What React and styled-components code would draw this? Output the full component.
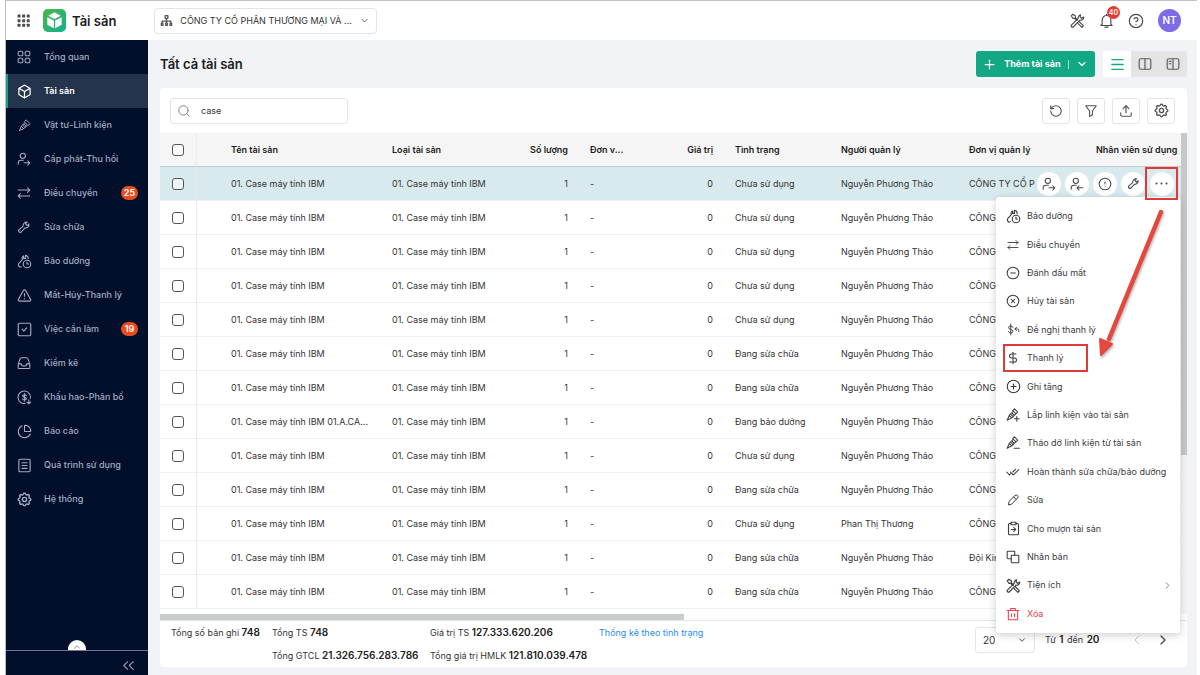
import styled, { createGlobalStyle, css } from 'styled-components'
import {
    Box, ChartPie, ChevronDown, ChevronLeft, ChevronRight, ChevronUp, ChevronsLeft, CircleAlert, CircleMinus,
    CirclePlus, CircleQuestionMark, CircleX, DollarSign, Menu as MenuLines, Plus,
    RotateCcw, Search, TriangleAlert, Upload,
} from 'lucide-react'
import { TbSettings } from 'react-icons/tb'


const GlobalStyle = createGlobalStyle`
* {
    box-sizing: border-box;
}
body {
    margin: 0;
    background: #fff;
    color: #333;
    font: 9px/14px Inter, "Noto Sans", sans-serif;
}
button, input, select {
    font: inherit;
    color: inherit;
    margin: 0;
}
button {
    cursor: pointer;
}
`

const shapes = {
    apps: <g fill="currentColor" stroke="none">{[1, 9.5, 18].map(x => [1, 9.5, 18].map(y => <rect key={x + '-' + y} x={x} y={y} width="5.500" height="5.500" rx="1" />))}</g>,
    overview: <><rect x="2" y="2" width="8" height="8" rx="2" /><rect x="14" y="2" width="8" height="8" rx="2" /><rect x="2" y="14" width="8" height="8" rx="2" /><rect x="14" y="14" width="8" height="8" rx="2" /></>,
    org: <path d="M9.500 3h5v5h-5zM12 8v5M4 17v-4h16v4M12 13v4M2.500 17h3v4h-3zM10.500 17h3v4h-3zM18.500 17h3v4h-3z" strokeWidth="2.400" />,
    screw: <path d="M15.500 2 22 8.500 18.500 12 12 5.500zM12.500 7 6 13.500 2.500 21.500 10.500 18 17 11.500M8.500 11l4.500 4.500M6.500 14l4 4M10.500 9l4.500 4.500" />,
    screwPlus: <path d="M14.500 1.500 20 7 17 10 11.500 4.500zM12 6 6 12 2 21 10.500 16.500 16 11M8 10.500l4.500 4.500M6 13l4 4M10 8.500l4 4M18.500 14.500v8M14.500 18.500h8" />,
    screwMinus: <path d="M14.500 1.500 20 7 17 10 11.500 4.500zM12 6 6 12 2 21 10.500 16.500 16 11M8 10.500l4.500 4.500M6 13l4 4M10 8.500l4 4M14 21h9" />,
    personOut: <><circle cx="10" cy="6.500" r="4.500" /><path d="M2 21v-2a5 5 0 0 1 5-5h4M12 18.500h10M18.500 15l3.500 3.500-3.500 3.500" /></>,
    personIn: <><circle cx="10" cy="6.500" r="4.500" /><path d="M2 21v-2a5 5 0 0 1 5-5h4M12 18.500h10M15.500 15 12 18.500l3.500 3.500" /></>,
    swap: <path d="M2 7h20M18 3l4 4-4 4M22 17H2M6 13l-4 4 4 4" />,
    wrench: <path d="M20.500 6.500 17.500 9.500 14.500 6.500 17.500 3.500A6 6 0 0 0 10.500 10.500L3 17a3 3 0 0 0 4 4L13.500 13.500A6 6 0 0 0 20.500 6.500zM5.500 18.500h.010" />,
    maintain: <><path d="M13.500 2v5h-3V3a5 5 0 0 0-2 6L3 15a3.500 3.500 0 0 0 4 5.500M13.500 2a5.500 5.500 0 0 1 4.500 5.500" /><circle cx="16" cy="16" r="6" /><path d="M16 13v3h2.500" /></>,
    task: <><rect x="2" y="2" width="20" height="20" rx="2" /><path d="m8.500 11.500 2.500 3 4.500-5" /></>,
    tray: <path d="M2 14 5 5.500C5.500 4 6.500 3 8 3h8c1.500 0 2.500 1 3 2.500L22 14v6a1.500 1.500 0 0 1-1.500 1.500h-17A1.500 1.500 0 0 1 2 20zM2 13.500h5.500c0 5 9 5 9 0H22" />,
    depreciation: <><path d="M21.500 13A10 10 0 1 0 13 21.500" /><path d="M15 9c-.500-1.500-6-2-6 .500 0 3 6 1.500 6 4.500 0 2.500-5.500 2.500-6 .500M12 5.500v12M19 15.500v6.500M16 19.500l3 2.500 3-2.500" /></>,
    document: <><rect x="3" y="2" width="18" height="20" rx="2" /><path d="M8 7.500h8M8 12h8M8 16.500h8" /></>,
    tools: <path d="M2 4.500 4.500 2 8.500 4.500V7.500l3.500 3.500M2 4.500l2.500 4h3l3.500 3.500M15 14l6.500 6.500-2.500 2.500-6-6M17 3A5 5 0 0 0 13 9L2.500 19a2 2 0 0 0 3 3L16 11.500A5 5 0 0 0 22 6.500L18.500 8.500 16 6z" />,
    bell: <path d="M12 2v2M5 18V11a7 7 0 0 1 14 0v7l2 2H3zM9.500 22.500h5" />,
    filter: <path d="M3 3h18l-6.500 9v6.500l-5 3V12z" />,
    columns: <><rect x="2" y="3" width="20" height="18" rx="3" /><path d="M12 3v18" /></>,
    columnsLeft: <><rect x="2" y="3" width="20" height="18" rx="3" /><path d="M12 3v18M5.500 7.500h3M5.500 11.500h3" /></>,
    propose: <path d="M11 8c-.500-3-8-3.500-8 .500 0 4.500 8 2.500 8 7 0 4-8 4-8.500 0M7 2v20M22 16v-2a3 3 0 0 0-3-3h-4M17.500 8 14.500 11l3 3" />,
    checks: <path d="m1 12 5 5 2-2M7.500 12l5 5 9.500-9M11.500 12l5-4.500" />,
    pencil: <path d="M16 3a3 3 0 0 1 5 5L9 20.500l-6 1.500 1-6.500zM13.500 6 18 10.500" />,
    lend: <><path d="M8 4H5.500A1.500 1.500 0 0 0 4 5.500v15A1.500 1.500 0 0 0 5.500 22h13a1.500 1.500 0 0 0 1.500-1.500v-15A1.500 1.500 0 0 0 18.500 4H16" /><rect x="8" y="2" width="8" height="4" /><path d="M8.500 13.500h7M12.500 10.500l3 3-3 3" /></>,
    clone: <><path d="M9 15H3.500A1.500 1.500 0 0 1 2 13.500v-10A1.500 1.500 0 0 1 3.500 2h10A1.500 1.500 0 0 1 15 3.500V9" /><rect x="9" y="9" width="13" height="13" rx="1.500" /></>,
    trash: <path d="M2 6h20M8 6V2.500h8V6M4 6v16h16V6M9.500 11.500v5M14.500 11.500v5" />,
    dots: <g fill="currentColor" stroke="none"><circle cx="4" cy="12" r="1.700" /><circle cx="12" cy="12" r="1.700" /><circle cx="20" cy="12" r="1.700" /></g>,
}

const Icon = ({ name, size = 14, weight = 1.8 }) => (
    <svg width={size} height={size} viewBox="0 0 24 24" fill="none" stroke="currentColor" strokeWidth={weight} strokeLinecap="round" strokeLinejoin="round" aria-hidden="true">
        {shapes[name]}
    </svg>
)

const navItems = [
    { label: 'Tổng quan', icon: <Icon name="overview" /> },
    { label: 'Tài sản', icon: <Box size={15} />, active: true },
    { label: 'Vật tư-Linh kiện', icon: <Icon name="screw" size={13} /> },
    { label: 'Cấp phát-Thu hồi', icon: <Icon name="personOut" /> },
    { label: 'Điều chuyển', icon: <Icon name="swap" />, count: 25 },
    { label: 'Sửa chữa', icon: <Icon name="wrench" /> },
    { label: 'Bảo dưỡng', icon: <Icon name="maintain" size={15} /> },
    { label: 'Mất-Hủy-Thanh lý', icon: <TriangleAlert size={15} strokeWidth={1.8} /> },
    { label: 'Việc cần làm', icon: <Icon name="task" size={15} />, count: 19 },
    { label: 'Kiểm kê', icon: <Icon name="tray" /> },
    { label: 'Khấu hao-Phân bổ', icon: <Icon name="depreciation" size={15} /> },
    { label: 'Báo cáo', icon: <ChartPie size={15} strokeWidth={1.8} /> },
    { label: 'Quá trình sử dụng', icon: <Icon name="document" size={15} /> },
    { label: 'Hệ thống', icon: <TbSettings size={17} /> },
]

const asset = (status, extra) => ({
    name: '01. Case máy tính IBM',
    type: '01. Case máy tính IBM',
    status,
    manager: 'Nguyễn Phương Thảo',
    unit: 'CÔNG TY CỔ P',
    ...extra,
})

const assets = [
    asset('Chưa sử dụng'),
    asset('Chưa sử dụng'),
    asset('Chưa sử dụng'),
    asset('Chưa sử dụng'),
    asset('Chưa sử dụng'),
    asset('Đang sửa chữa'),
    asset('Đang sửa chữa'),
    asset('Đang bảo dưỡng', { name: '01. Case máy tính IBM 01.A.CA...' }),
    asset('Chưa sử dụng'),
    asset('Đang sửa chữa'),
    asset('Chưa sử dụng', { manager: 'Phan Thị Thương' }),
    asset('Đang sửa chữa', { unit: 'Đội Kinh doanh' }),
    asset('Đang sửa chữa'),
]

const menuItems = [
    { label: 'Bảo dưỡng', icon: <Icon name="maintain" size={15} /> },
    { label: 'Điều chuyển', icon: <Icon name="swap" size={12} /> },
    { label: 'Đánh dấu mất', icon: <CircleMinus size={14} strokeWidth={1.8} /> },
    { label: 'Hủy tài sản', icon: <CircleX size={14} strokeWidth={1.8} /> },
    { label: 'Đề nghị thanh lý', icon: <Icon name="propose" size={13} /> },
    { label: 'Thanh lý', icon: <DollarSign size={14} strokeWidth={1.8} />, marked: true },
    { label: 'Ghi tăng', icon: <CirclePlus size={15} strokeWidth={1.8} /> },
    { label: 'Lắp linh kiện vào tài sản', icon: <Icon name="screwPlus" /> },
    { label: 'Tháo dỡ linh kiện từ tài sản', icon: <Icon name="screwMinus" /> },
    { label: 'Hoàn thành sửa chữa/bảo dưỡng', icon: <Icon name="checks" /> },
    { label: 'Sửa', icon: <Icon name="pencil" size={12} weight={2} /> },
    { label: 'Cho mượn tài sản', icon: <Icon name="lend" size={15} /> },
    { label: 'Nhân bản', icon: <Icon name="clone" /> },
    { label: 'Tiện ích', icon: <Icon name="tools" size={15} />, more: true },
    { label: 'Xóa', icon: <Icon name="trash" />, danger: true },
]

const TopBar = () => (
    <Header>
        <PlainButton aria-label="Ứng dụng"><Icon name="apps" size={13} /></PlainButton>
        <Brand>
            <Logo viewBox="0 0 24 24" aria-hidden="true">
                <defs>
                    <linearGradient id="logo" x1="0" y1="0" x2="1" y2="1">
                        <stop offset="0" stopColor="#4cb74a" />
                        <stop offset="1" stopColor="#12b08b" />
                    </linearGradient>
                </defs>
                <rect width="24" height="24" rx="5" fill="url(#logo)" />
                <path d="M12 3.500 18.500 7 12 10.500 5.500 7z" fill="#fff" />
                <path d="M4.500 8.500 11.300 12v8L4.500 16.500zM19.500 8.500 12.700 12v8l6.800-3.500z" fill="#fff" />
            </Logo>
            Tài sản
        </Brand>
        <CompanyField>
            <Icon name="org" size={13} />
            <CompanySelect aria-label="Công ty">
                <option>CÔNG TY CỔ PHẦN THƯƠNG MẠI VÀ ...</option>
            </CompanySelect>
            <ChevronDown size={11} />
        </CompanyField>
        <HeaderActions>
            <PlainButton aria-label="Công cụ"><Icon name="tools" size={15} /></PlainButton>
            <PlainButton aria-label="Thông báo">
                <Icon name="bell" size={15} />
                <BellCount>40</BellCount>
            </PlainButton>
            <PlainButton aria-label="Trợ giúp"><CircleQuestionMark size={16} strokeWidth={1.8} /></PlainButton>
            <Avatar>NT</Avatar>
        </HeaderActions>
    </Header>
)

const SideBar = () => (
    <Side>
        <Nav>
            {navItems.map(item => (
                <NavLink key={item.label} href="#" $active={item.active}>
                    <NavIcon>{item.icon}</NavIcon>
                    {item.label}
                    {item.count && <NavCount>{item.count}</NavCount>}
                </NavLink>
            ))}
        </Nav>
        <ScrollHint><ChevronUp size={10} /></ScrollHint>
        <Collapse aria-label="Thu gọn"><ChevronsLeft size={19} strokeWidth={1.4} /></Collapse>
    </Side>
)

const RowActions = () => (
    <Actions>
        <RoundButton aria-label="Cấp phát"><Icon name="personOut" /></RoundButton>
        <RoundButton aria-label="Thu hồi"><Icon name="personIn" /></RoundButton>
        <RoundButton aria-label="Báo hỏng"><CircleAlert size={14} strokeWidth={1.8} /></RoundButton>
        <RoundButton aria-label="Sửa chữa"><Icon name="wrench" size={13} weight={2} /></RoundButton>
        <Marked>
            <RoundButton aria-label="Thêm"><Icon name="dots" size={15} /></RoundButton>
        </Marked>
    </Actions>
)

const AssetTable = () => (
    <TableArea>
        <Table>
            <colgroup>
                {[37, 184, 119, 79, 66, 79, 106, 128, 127].map((width, index) => <col key={index} width={width} />)}
                <col />
            </colgroup>
            <thead>
                <tr>
                    <CheckHead><Check type="checkbox" aria-label="Chọn tất cả" /></CheckHead>
                    <Th $indent>Tên tài sản</Th>
                    <Th>Loại tài sản</Th>
                    <Th $right>Số lượng</Th>
                    <Th>Đơn v...</Th>
                    <Th $right>Giá trị</Th>
                    <Th>Tình trạng</Th>
                    <Th>Người quản lý</Th>
                    <Th>Đơn vị quản lý</Th>
                    <Th>Nhân viên sử dụng</Th>
                </tr>
            </thead>
            <tbody>
                {assets.map((row, index) => (
                    <Row key={index} $selected={index === 0}>
                        <CheckCell><Check type="checkbox" aria-label={row.name} /></CheckCell>
                        <Td $indent>{row.name}</Td>
                        <Td>{row.type}</Td>
                        <Td $right>1</Td>
                        <Td>-</Td>
                        <Td $right>0</Td>
                        <Td>{row.status}</Td>
                        <Td>{row.manager}</Td>
                        <Td>{row.unit}</Td>
                        <ActionCell>{index === 0 && <RowActions />}</ActionCell>
                    </Row>
                ))}
            </tbody>
        </Table>
        <ScrollTrack><ScrollThumb /></ScrollTrack>
    </TableArea>
)

const ContextMenu = () => (
    <Menu>
        {menuItems.map(item => (
            <MenuItem key={item.label} $marked={item.marked} $danger={item.danger}>
                <MenuIcon>{item.icon}</MenuIcon>
                {item.label}
                {item.more && <MenuMore><ChevronRight size={11} /></MenuMore>}
            </MenuItem>
        ))}
        <Arrow viewBox="0 0 80 160" aria-hidden="true">
            <path d="M70 11 18 138" stroke="#e5483f" strokeWidth="4.500" strokeLinecap="round" />
            <path d="M10 154 9 138 21 143z" fill="#e5483f" stroke="#e5483f" strokeWidth="2" strokeLinejoin="round" />
        </Arrow>
    </Menu>
)

const TableFooter = () => (
    <Foot>
        <Stats>
            <span>Tổng số bản ghi <b>748</b></span>
            <span>Tổng TS <b>748</b></span>
            <span>Giá trị TS <b>127.333.620.206</b></span>
            <StatLink href="#">Thống kê theo tình trạng</StatLink>
            <i />
            <span>Tổng GTCL <b>21.326.756.283.786</b></span>
            <span>Tổng giá trị HMLK <b>121.810.039.478</b></span>
        </Stats>
        <Pager>
            <PageSize>
                <select aria-label="Số dòng">
                    <option>20</option>
                </select>
                <ChevronDown size={10} />
            </PageSize>
            <Range>Từ <b>1</b> đến <b>20</b></Range>
            <PlainButton aria-label="Trang trước" disabled><ChevronLeft size={16} strokeWidth={1.5} /></PlainButton>
            <PlainButton aria-label="Trang sau"><ChevronRight size={16} /></PlainButton>
        </Pager>
    </Foot>
)

const App = () => {
    return (
        <Page>
            <GlobalStyle />
            <TopBar />
            <Body>
                <SideBar />
                <Main>
                    <TitleRow>
                        <Title>Tất cả tài sản</Title>
                        <AddButton>
                            <Plus size={15} />
                            <span>Thêm tài sản</span>
                            <Divider />
                            <ChevronDown size={12} strokeWidth={2.4} />
                        </AddButton>
                        <Views>
                            <ViewButton $active aria-label="Danh sách"><MenuLines size={17} strokeWidth={1.8} /></ViewButton>
                            <ViewButton aria-label="Hai cột"><Icon name="columns" weight={2} /></ViewButton>
                            <ViewButton aria-label="Chi tiết"><Icon name="columnsLeft" weight={2} /></ViewButton>
                        </Views>
                    </TitleRow>
                    <Card>
                        <ToolRow>
                            <SearchField>
                                <Search size={14} strokeWidth={1.6} />
                                <input aria-label="Tìm kiếm" defaultValue="case" />
                            </SearchField>
                            <Tools>
                                <ToolButton aria-label="Làm mới"><RotateCcw size={14} /></ToolButton>
                                <ToolButton aria-label="Lọc"><Icon name="filter" weight={2} /></ToolButton>
                                <ToolButton aria-label="Xuất"><Upload size={14} /></ToolButton>
                                <ToolButton aria-label="Thiết lập"><TbSettings size={17} /></ToolButton>
                            </Tools>
                        </ToolRow>
                        <AssetTable />
                        <BottomTrack><BottomThumb /></BottomTrack>
                        <TableFooter />
                        <ContextMenu />
                    </Card>
                </Main>
            </Body>
        </Page>
    )
}

export default App



const Page = styled.div`
display: flex;
flex-direction: column;
height: 100vh;
min-height: 640px;
margin: 0 3px 0 5px;
border-top: 1px solid #c4c4c6;
border-left: 1px solid #b9bcc2;
overflow: hidden;
`

const Header = styled.header`
display: flex;
align-items: center;
flex: none;
height: 39px;
padding: 0 16px 0 11px;
background: #fff;
`

const PlainButton = styled.button`
position: relative;
display: flex;
padding: 0;
border: 0;
background: none;
color: #4b4b4f;

&:disabled {
    color: #c6c6c8;
}
`

const Brand = styled.div`
display: flex;
align-items: center;
gap: 6px;
margin: 0 38px 0 13px;
color: #1c1c20;
font-size: 13px;
font-weight: 600;
white-space: nowrap;
`

const Logo = styled.svg`
width: 23px;
height: 23px;
`

const CompanyField = styled.label`
display: flex;
align-items: center;
width: 223px;
height: 26px;
padding: 0 6px 0 5px;
border: 1px solid #e4e4e8;
border-radius: 4px;
color: #55555a;
`

const CompanySelect = styled.select`
flex: 1;
min-width: 0;
margin-left: 7px;
padding: 0;
border: 0;
background: none;
appearance: none;
color: #333;
`

const HeaderActions = styled.div`
display: flex;
align-items: center;
gap: 14px;
margin-left: auto;
`

const BellCount = styled.span`
position: absolute;
top: -7px;
right: -6px;
width: 13px;
height: 13px;
border-radius: 7px;
background: #e53a32;
color: #fff;
font-size: 7px;
font-weight: 600;
line-height: 13px;
text-align: center;
`

const Avatar = styled.span`
width: 23px;
height: 23px;
border-radius: 50%;
background: #7d6ce6;
color: #fff;
font-size: 10px;
font-weight: 600;
line-height: 23px;
text-align: center;
`

const Body = styled.div`
display: flex;
flex: 1;
min-height: 0;
`

const Side = styled.aside`
display: flex;
flex-direction: column;
flex: none;
width: 142px;
background: #010f2b;
color: #a3adc2;
`

const Nav = styled.nav`
flex: 1;
min-height: 0;
overflow: hidden;
`

const NavLink = styled.a`
display: flex;
align-items: center;
height: 34px;
padding-right: 10px;
border-left: 2px solid transparent;
color: inherit;
font-weight: 500;
text-decoration: none;
white-space: nowrap;

${({ $active }) => $active && css`
    border-color: #16a37f;
    background: #24344d;
    color: #fff;
    font-weight: 600;
`}
`

const NavIcon = styled.span`
display: flex;
justify-content: center;
width: 32px;
margin-right: 4px;
`

const NavCount = styled.span`
width: 17px;
height: 14px;
margin-left: auto;
border-radius: 7px;
background: #ea4c1d;
color: #fff;
font-weight: 600;
line-height: 14px;
text-align: center;
`

const ScrollHint = styled.div`
display: flex;
justify-content: center;
align-self: center;
width: 18px;
height: 10px;
padding-top: 2px;
border-radius: 9px 9px 0 0;
background: #fff;
color: #777;
`

const Collapse = styled.button`
display: flex;
align-items: center;
justify-content: flex-end;
height: 25px;
padding: 4px 10px 0;
border: 0;
border-top: 1px solid #7d6f9c;
background: none;
color: #8f9ab0;
`

const Main = styled.main`
display: flex;
flex-direction: column;
flex: 1;
min-width: 0;
padding: 0 10px 8px 12px;
background: #f2f3f7;
`

const TitleRow = styled.div`
display: flex;
align-items: center;
flex: none;
height: 48px;
`

const Title = styled.h1`
flex: 1;
margin: 0;
color: #1c1c20;
font-size: 13px;
font-weight: 600;
`

const AddButton = styled.button`
display: flex;
align-items: center;
justify-content: space-between;
width: 119px;
height: 26px;
padding: 0 7px 0 6px;
border: 0;
border-radius: 3px;
background: #12a884;
color: #fff;
font-weight: 700;
white-space: nowrap;
`

const Divider = styled.i`
width: 1px;
height: 9px;
background: #a5e0d0;
`

const Views = styled.div`
display: flex;
margin-left: 8px;
border-radius: 3px;
background: #e4e4e5;
overflow: hidden;
`

const ViewButton = styled.button`
display: flex;
align-items: center;
justify-content: center;
width: 28px;
height: 26px;
padding: 0;
border: 0;
background: ${({ $active }) => $active ? '#fff' : 'none'};
color: ${({ $active }) => $active ? '#12a884' : '#5c5c60'};
`

const Card = styled.section`
position: relative;
display: flex;
flex-direction: column;
flex: 1;
min-height: 0;
border-radius: 4px;
background: #fff;
`

const ToolRow = styled.div`
display: flex;
align-items: center;
justify-content: space-between;
flex: none;
height: 45px;
padding: 0 12px 0 10px;
`

const SearchField = styled.label`
display: flex;
align-items: center;
gap: 10px;
width: 178px;
height: 26px;
padding: 0 6px;
border: 1px solid #e4e4e8;
border-radius: 3px;
color: #777;

input {
    flex: 1;
    min-width: 0;
    padding: 0;
    border: 0;
    outline: 0;
    color: #333;
}
`

const Tools = styled.div`
display: flex;
gap: 7px;
`

const ToolButton = styled.button`
display: flex;
align-items: center;
justify-content: center;
width: 28px;
height: 26px;
padding: 0;
border: 1px solid #e4e4e8;
border-radius: 3px;
background: #fff;
color: #55555a;
`

const TableArea = styled.div`
display: flex;
flex: 1;
min-height: 0;
overflow: hidden;
`

const Table = styled.table`
flex: 1;
align-self: flex-start;
min-width: 0;
width: 100%;
table-layout: fixed;
border-collapse: separate;
border-spacing: 0;
`

const cell = css`
height: 34px;
padding: 0 0 0 ${({ $indent }) => $indent ? 34 : 11}px;
padding-right: ${({ $right }) => $right ? 11 : 0}px;
overflow: hidden;
text-align: ${({ $right }) => $right ? 'right' : 'left'};
white-space: nowrap;
`

const Th = styled.th`
${cell}
border-bottom: 1px solid #c3cbcc;
background: #f5f5f5;
color: #1c1c20;
font-weight: 600;
`

const Td = styled.td`
${cell}
border-bottom: 1px solid #f0f0f1;
`

const CheckHead = styled(Th)`
padding: 0;
border-right: 1px solid #ebebec;
text-align: center;
`

const CheckCell = styled(Td)`
padding: 0;
border-right: 1px solid #ebebec;
text-align: center;
`

const ActionCell = styled(Td)`
position: relative;
overflow: visible;
`

const Row = styled.tr`
background: ${({ $selected }) => $selected ? '#d8eaee' : '#fff'};
`

const Check = styled.input`
appearance: none;
display: block;
width: 12px;
height: 12px;
margin: 0 auto;
border: 1px solid #55555a;
border-radius: 3px;
background: #fff8;
`

const Actions = styled.div`
position: absolute;
top: 0;
right: 3px;
display: flex;
align-items: center;
gap: 4px;
height: 33px;
background: #d8eaee;
`

const RoundButton = styled.button`
display: flex;
align-items: center;
justify-content: center;
width: 24px;
height: 24px;
padding: 0;
border: 0;
border-radius: 50%;
background: #fff;
color: #4b4b4f;
`

const Marked = styled.span`
position: relative;
z-index: 1;
display: flex;
align-items: center;
justify-content: center;
width: 33px;
height: 33px;
margin-left: -4px;
border: 2px solid #dd3b38;
`

const ScrollTrack = styled.div`
flex: none;
width: 6px;
background: #f5f5f6;
`

const ScrollThumb = styled.div`
height: 67%;
background: #c6c9ca;
`

const BottomTrack = styled.div`
flex: none;
height: 7px;
border-bottom: 1px solid #e4e4e8;
`

const BottomThumb = styled.div`
width: 51%;
height: 6px;
background: #c9cccd;
`

const Foot = styled.footer`
display: flex;
align-items: flex-start;
justify-content: space-between;
flex: none;
height: 46px;
padding: 0 16px 0 11px;
white-space: nowrap;

b {
    color: #222;
    font-size: 10px;
    font-weight: 600;
}
`

const Stats = styled.div`
display: grid;
grid-template-columns: 101px 158px 169px auto;
grid-auto-rows: 23px;
line-height: 23px;
`

const StatLink = styled.a`
color: #2a8bf2;
text-decoration: none;
`

const Pager = styled.div`
display: flex;
align-items: center;
gap: 10px;
height: 37px;
`

const PageSize = styled.label`
display: flex;
align-items: center;
width: 60px;
height: 26px;
padding: 0 7px;
border: 1px solid #e4e4e8;
border-radius: 3px;
font-size: 10px;

select {
    flex: 1;
    min-width: 0;
    padding: 0;
    border: 0;
    background: none;
    appearance: none;
}
`

const Range = styled.span`
width: 74px;

b {
    margin: 0 1px;
}
`

const Menu = styled.div`
position: absolute;
top: 109px;
right: 7px;
display: grid;
grid-auto-rows: 1fr;
width: 184px;
height: 436px;
padding: 5px 7px;
border-radius: 3px;
background: #fff;
box-shadow: 0 2px 8px #0003;
`

const MenuItem = styled.button`
display: flex;
align-items: center;
justify-self: ${({ $marked }) => $marked ? 'start' : 'stretch'};
width: ${({ $marked }) => $marked ? '85px' : 'auto'};
padding: 0;
border: 0;
outline: ${({ $marked }) => $marked ? '2px solid #dd3b38' : 'none'};
outline-offset: -2px;
background: none;
color: ${({ $danger }) => $danger ? '#ee3d4e' : '#3c3c40'};
white-space: nowrap;
`

const MenuIcon = styled.span`
display: flex;
justify-content: center;
width: 20px;
margin-right: 4px;
`

const MenuMore = styled.span`
display: flex;
margin-left: auto;
color: #777;
`

const Arrow = styled.svg`
position: absolute;
top: 4px;
left: 95px;
width: 80px;
height: 160px;
filter: drop-shadow(1px 2px 1px #0004);
pointer-events: none;
`
